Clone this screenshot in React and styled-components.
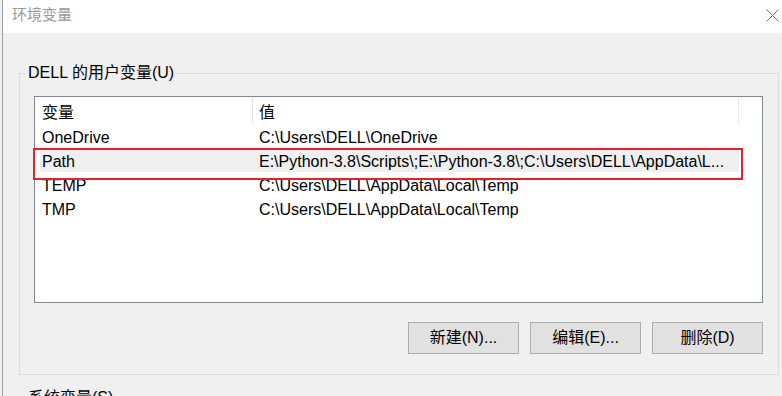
import React from "react";
import styled, { createGlobalStyle } from "styled-components";

const Global = createGlobalStyle`
  html, body { margin: 0; padding: 0; background: #f0f0f0; }
  #root { width: 782px; height: 396px; overflow: hidden; }
  * { box-sizing: border-box; }
`;

const FONT = `"Liberation Sans", "Noto Sans CJK SC", sans-serif`;

const Screen = styled.div`
  width: 782px;
  height: 396px;
  overflow: hidden;
  display: flex;
  padding-left: 2px;
  background: #f0f0f0;
  font-family: ${FONT};
  font-size: 16px;
  color: #000;
`;

const Window = styled.div`
  flex: 1;
  display: flex;
  flex-direction: column;
  border-left: 1px solid #a0a0a0;
  background: #f0f0f0;
`;

const TitleBar = styled.div`
  height: 33px;
  flex: none;
  background: #fff;
  display: flex;
  align-items: center;
  justify-content: space-between;
  padding: 0 3px 3px 9px;
`;

const Title = styled.span`
  font-size: 15px;
  color: #9a9a9a;
  line-height: 20px;
`;

const Body = styled.div`
  padding: 30px 3px 0 16px;
  display: flex;
  flex-direction: column;
`;

const Group = styled.fieldset`
  margin: ${(p) => (p.$second ? "13px 0 0 0" : "0")};
  padding: 0 15px ${(p) => (p.$second ? "40px" : "20px")} 14px;
  border: 1px solid #dcdcdc;
  min-width: 0;
`;

const Legend = styled.legend`
  margin-left: -8px;
  padding: 0 2px;
  font-size: 16px;
  line-height: 20px;
`;

const ListBox = styled.div`
  position: relative;
  margin-top: 13px;
  height: 207px;
  border: 1px solid #828790;
  background: #fff;
`;

const Row = styled.div`
  display: grid;
  grid-template-columns: 212px 487px;
  width: 699px;
  margin-left: 5px;
  height: ${(p) => (p.$header ? "27px" : "24px")};
  padding-top: ${(p) => (p.$header ? "0" : "3px")};
  align-items: center;
  background: ${(p) => (p.$selected ? "#efefef" : "transparent")};
  line-height: 20px;
  white-space: nowrap;
`;

const NameCell = styled.div`
  padding-left: 2px;
  overflow: hidden;
`;

const ValueCell = styled.div`
  padding-left: 7px;
  overflow: hidden;
`;

const HeaderName = styled.div`
  padding-left: 2px;
  height: 25px;
  display: flex;
  align-items: center;
  padding-top: 4px;
`;

const HeaderValue = styled.div`
  height: 25px;
  padding-left: 6px;
  border-left: 1px solid #e5e5e5;
  border-right: 1px solid #e5e5e5;
  display: flex;
  align-items: center;
  padding-top: 4px;
`;

const RedMark = styled.div`
  position: absolute;
  left: -2px;
  top: 51px;
  width: 710px;
  height: 32px;
  border: 2px solid #e3222b;
  pointer-events: none;
`;

const ButtonRow = styled.div`
  display: flex;
  justify-content: flex-end;
  gap: 11px;
  margin-top: 19px;
`;

const Button = styled.button`
  width: 111px;
  height: 32px;
  background: #e1e1e1;
  border: 1px solid #adadad;
  font-family: ${FONT};
  font-size: 16px;
  color: #000;
  padding: 0;
  line-height: 20px;
`;

const rows = [
  { name: "OneDrive", value: "C:\\Users\\DELL\\OneDrive" },
  {
    name: "Path",
    value: "E:\\Python-3.8\\Scripts\\;E:\\Python-3.8\\;C:\\Users\\DELL\\AppData\\L...",
    selected: true,
  },
  { name: "TEMP", value: "C:\\Users\\DELL\\AppData\\Local\\Temp" },
  { name: "TMP", value: "C:\\Users\\DELL\\AppData\\Local\\Temp" },
];

function CloseIcon() {
  return (
    <svg width="13" height="13" viewBox="0 0 13 13">
      <path d="M0.5 0.5 L12.5 12.5 M12.5 0.5 L0.5 12.5" stroke="#707070" strokeWidth="1" fill="none" />
    </svg>
  );
}

export default function App() {
  return (
    <>
      <Global />
      <Screen>
        <Window>
          <TitleBar>
            <Title>环境变量</Title>
            <CloseIcon />
          </TitleBar>
          <Body>
            <Group>
              <Legend>DELL 的用户变量(U)</Legend>
              <ListBox>
                <Row $header>
                  <HeaderName>变量</HeaderName>
                  <HeaderValue>值</HeaderValue>
                </Row>
                {rows.map((r) => (
                  <Row key={r.name} $selected={r.selected}>
                    <NameCell>{r.name}</NameCell>
                    <ValueCell>{r.value}</ValueCell>
                  </Row>
                ))}
                <RedMark />
              </ListBox>
              <ButtonRow>
                <Button>新建(N)...</Button>
                <Button>编辑(E)...</Button>
                <Button>删除(D)</Button>
              </ButtonRow>
            </Group>
            <Group $second>
              <Legend>系统变量(S)</Legend>
            </Group>
          </Body>
        </Window>
      </Screen>
    </>
  );
}
